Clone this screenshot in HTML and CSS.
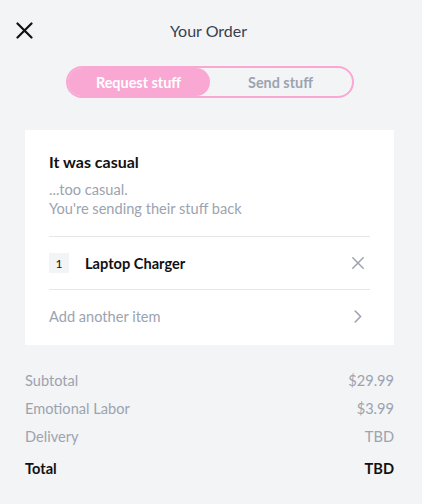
FILE: index.html
```html
<!DOCTYPE html>
<html lang="en">
<head>
<meta charset="utf-8">
<title>Your Order</title>
<link rel="stylesheet" href="styles.css">
</head>
<body>
<div class="page">
  <header class="header">
    <button class="close" aria-label="Close">
      <svg width="17" height="17" viewBox="0 0 17 17"><path d="M1.5 1.5 L15.5 15.5 M15.5 1.5 L1.5 15.5" stroke="#111" stroke-width="2.2" stroke-linecap="round" fill="none"/></svg>
    </button>
    <h1 class="title">Your Order</h1>
    <span></span>
  </header>

  <div class="content">
    <div class="toggle">
      <span class="tab active">Request stuff</span>
      <span class="tab">Send stuff</span>
    </div>

    <section class="card">
      <div class="card-head">
        <h2 class="card-title">It was casual</h2>
        <p class="sub">...too casual.</p>
        <p class="sub">You're sending their stuff back</p>
      </div>
      <div class="item-row">
        <span class="qty">1</span>
        <span class="item-name">Laptop Charger</span>
        <svg class="remove" width="12" height="12" viewBox="0 0 12 12"><path d="M0.8 0.8 L11.2 11.2 M11.2 0.8 L0.8 11.2" stroke="#9ca3af" stroke-width="1.5" stroke-linecap="round" fill="none"/></svg>
      </div>
      <div class="add-row">
        <span>Add another item</span>
        <svg width="8" height="13" viewBox="0 0 8 13"><path d="M1.2 1 L6.6 6.5 L1.2 12" stroke="#9ca3af" stroke-width="1.6" stroke-linecap="round" stroke-linejoin="round" fill="none"/></svg>
      </div>
    </section>

    <dl class="summary">
      <div class="line"><dt>Subtotal</dt><dd>$29.99</dd></div>
      <div class="line"><dt>Emotional Labor</dt><dd>$3.99</dd></div>
      <div class="line"><dt>Delivery</dt><dd>TBD</dd></div>
      <div class="line total"><dt>Total</dt><dd>TBD</dd></div>
    </dl>
  </div>
</div>
</body>
</html>
```

FILE: styles.css
```css
* { box-sizing: border-box; }
html, body { margin: 0; padding: 0; }
body {
  background: #f3f4f6;
  font-family: "Lato", "Liberation Sans", sans-serif;
  font-size: 14.6px;
  color: #111;
  width: 422px;
  height: 504px;
}
.page { display: flex; flex-direction: column; }
.header {
  display: grid;
  grid-template-columns: 1fr auto 1fr;
  align-items: center;
  height: 32px;
  margin-top: 14px;
  padding: 0 21px 0 16px;
}
.close {
  justify-self: start;
  display: flex;
  padding: 0;
  border: 0;
  background: none;
  width: 17px;
  height: 17px;
}
.title {
  margin: 0;
  font-size: 16px;
  font-weight: 400;
  color: #374151;
}
.content {
  display: flex;
  flex-direction: column;
  padding: 0 28px 0 25px;
}
.toggle {
  align-self: center;
  margin-top: 20px;
  width: 288px;
  height: 32px;
  border: 2px solid #f9a8d4;
  border-radius: 16px;
  display: grid;
  grid-template-columns: 1fr 1fr;
}
.tab {
  display: flex;
  align-items: center;
  justify-content: center;
  font-weight: 700;
  font-size: 14.4px;
  color: #9ca3af;
  border-radius: 14px;
}
.tab.active { background: #f9a8d4; color: #fff; }
.card {
  margin-top: 32px;
  background: #fff;
  padding: 22px 24px 3px;
}
.card-head { padding-bottom: 18px; border-bottom: 1px solid #e5e7eb; }
.card-title {
  margin: 0 0 8px;
  font-size: 16px;
  line-height: 20px;
  font-weight: 700;
  color: #111;
}
.sub { margin: 0; line-height: 19px; color: #9ca3af; }
.item-row {
  display: flex;
  align-items: center;
  height: 53px;
  border-bottom: 1px solid #e5e7eb;
}
.qty {
  width: 20px;
  height: 20px;
  background: #f3f4f6;
  display: flex;
  align-items: center;
  justify-content: center;
  font-size: 12px;
  color: #111;
}
.item-name { margin-left: 16px; font-weight: 700; flex: 1; }
.remove { margin-right: 6px; }
.add-row {
  display: flex;
  align-items: center;
  justify-content: space-between;
  height: 52px;
  color: #9ca3af;
}
.add-row svg { margin-right: 8px; }
.summary { margin: 21px 0 0; }
.line {
  display: flex;
  justify-content: space-between;
  align-items: center;
  height: 28px;
  color: #9ca3af;
}
.line dt, .line dd { margin: 0; }
.line.total { margin-top: 4px; color: #111; font-weight: 700; }
```
